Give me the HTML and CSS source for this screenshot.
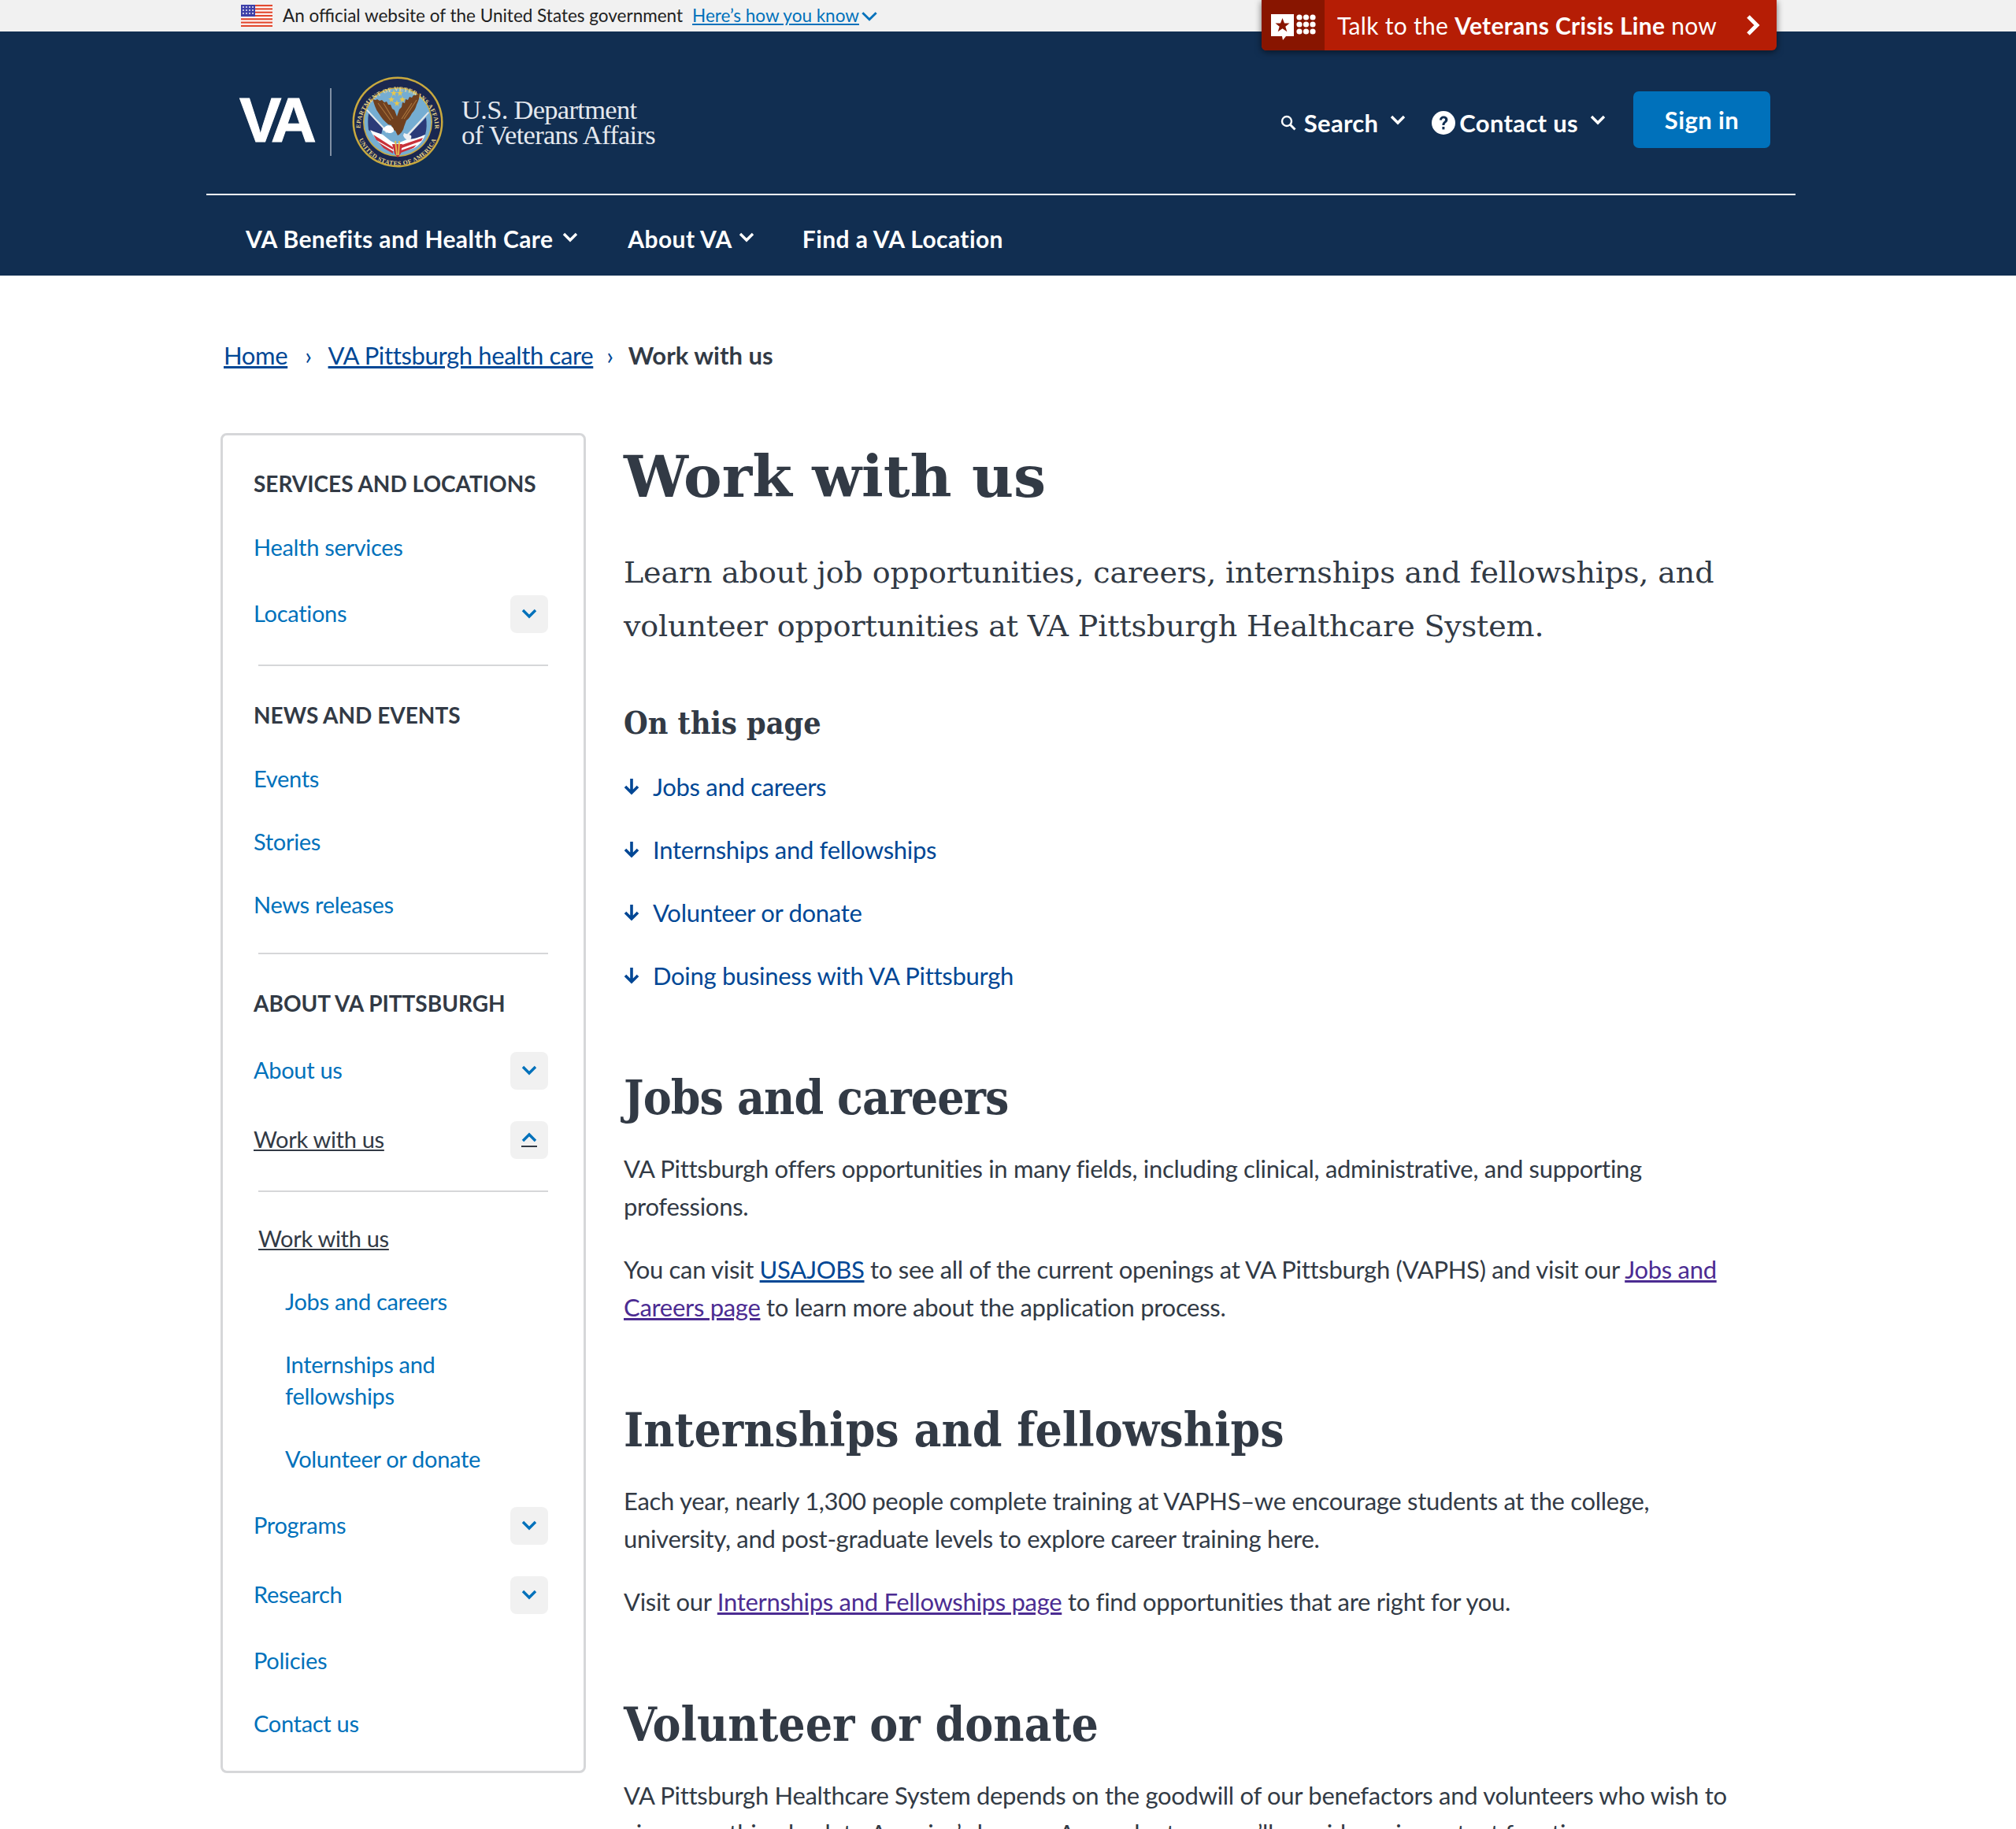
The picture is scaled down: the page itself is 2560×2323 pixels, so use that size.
FILE: index.html
```html
<!DOCTYPE html>
<html lang="en">
<head>
<meta charset="utf-8">
<title>Work with us | VA Pittsburgh health care</title>
<link rel="stylesheet" href="styles.css">
</head>
<body>
<div class="gov-banner">
  <svg class="flag" viewBox="0 0 40 28" width="40" height="28"><rect width="40" height="28" fill="#fff"/><g fill="#e2492f"><rect width="40" height="2.2"/><rect y="4.3" width="40" height="2.2"/><rect y="8.6" width="40" height="2.2"/><rect y="12.9" width="40" height="2.2"/><rect y="17.2" width="40" height="2.2"/><rect y="21.5" width="40" height="2.2"/><rect y="25.8" width="40" height="2.2"/></g><rect width="18" height="15" fill="#3d3fa8"/><g fill="#fff"><circle cx="3" cy="3" r=".9"/><circle cx="7" cy="3" r=".9"/><circle cx="11" cy="3" r=".9"/><circle cx="15" cy="3" r=".9"/><circle cx="3" cy="7" r=".9"/><circle cx="7" cy="7" r=".9"/><circle cx="11" cy="7" r=".9"/><circle cx="15" cy="7" r=".9"/><circle cx="3" cy="11" r=".9"/><circle cx="7" cy="11" r=".9"/><circle cx="11" cy="11" r=".9"/><circle cx="15" cy="11" r=".9"/></g></svg>
  <span class="gov-text">An official website of the United States government</span>
  <a class="gov-link" href="#">Here’s how you know</a>
  <svg class="gov-chev" viewBox="0 0 20 12" width="22" height="13"><path d="M2 2l8 8 8-8" fill="none" stroke="#0071bb" stroke-width="2.6"/></svg>
</div>

<a class="crisis" href="#">
  <span class="crisis-icon">
    <svg viewBox="0 0 58 34" width="58" height="34"><path d="M1 1h29v28H20l-4 5-1-5H1z" fill="#fff"/><path d="M15.500 6l2.500 6.500h6.500l-5.200 4.200 2 6.500-5.800-4-5.800 4 2-6.500-5.200-4.200h6.500z" fill="#881500"/><g fill="#fff"><circle cx="37" cy="5" r="3.600"/><circle cx="45.500" cy="5" r="3.600"/><circle cx="54" cy="5" r="3.600"/><circle cx="37" cy="14" r="3.600"/><circle cx="45.500" cy="14" r="3.600"/><circle cx="54" cy="14" r="3.600"/><circle cx="37" cy="23" r="3.600"/><circle cx="45.500" cy="23" r="3.600"/><circle cx="54" cy="23" r="3.600"/></g></svg>
  </span>
  <span class="crisis-text">Talk to the <b>Veterans Crisis Line</b> now</span>
  <svg class="crisis-chev" viewBox="0 0 18 26" width="18" height="26"><path d="M3 2l11 11L3 24" fill="none" stroke="#fff" stroke-width="5"/></svg>
</a>

<header class="site-header">
  <div class="header-inner">
    <div class="top-row">
      <a class="brand" href="#">
        <span class="brand-va">VA</span>
        <span class="brand-rule"></span>
        <svg class="seal" viewBox="0 0 116 116" width="116" height="116">
          <defs>
            <path id="arcTop" d="M10.500 66A47.500 47.500 0 1 1 105.500 66"/>
            <path id="arcBot" d="M5 60A53 53 0 0 0 111 60"/>
          </defs>
          <circle cx="58" cy="58" r="57.500" fill="#c9a93e"/>
          <circle cx="58" cy="58" r="55" fill="#1a2750"/>
          <circle cx="58" cy="58" r="44" fill="#c9a93e"/>
          <circle cx="58" cy="58" r="42.500" fill="#75add2"/>
          <text class="seal-text"><textPath href="#arcTop" startOffset="50%" text-anchor="middle">DEPARTMENT OF VETERANS AFFAIRS</textPath></text>
          <text class="seal-text"><textPath href="#arcBot" startOffset="50%" text-anchor="middle">UNITED STATES OF AMERICA</textPath></text>
          <path d="M18 43l1.500-1 26 28-2 2z" fill="#e8e8e8"/>
          <path d="M98 46l-1.500-1-28 30 2 2z" fill="#e8e8e8"/>
          <path d="M21 47l18 19-2 8c-6-2-12-2-16-6-1-7-1-14 0-21z" fill="#2b3a78"/>
          <path d="M94 52L73 74l1 6c6 0 13-2 19-6 2-7 2-14 1-22z" fill="#2b3a78"/>
          <path d="M23 68c6 3 12 4 16 6l10 8 8 4v10l-8-2c-8-4-18-10-26-26z" fill="#fff"/>
          <path d="M56 86l14-6c8 0 16-3 23-6-3 8-8 14-16 18l-21 4z" fill="#fff"/>
          <path d="M27 74l25 16v3L31 81zM34 84l18 11v3L40 91zM60 88l30-10-2 4-28 10zM62 94l20-7-4 4-16 6z" fill="#c8313a"/>
          <path d="M51 86h13l-2 12-4 5-4-5z" fill="#c8313a"/>
          <path d="M55 82l2 18M60 82l-1 18" fill="none" stroke="#e2c14d" stroke-width="1.800"/>
          <path d="M25 29l5 1 2-1 3 2 3-1 3 3 3-1 2 4 3 0 2 5 3 2 3 8 3-9 3-3 1-6 3 1 1-5 3 1 2-4 3 1 2-3 3 0 5-3c0 6-2 11-4 15-1 4-3 8-6 11-2 4-4 7-7 9l-3 8c-1 5-4 9-8 11l-3-6c-3-1-5-4-5-7l-4-1c-5-4-9-9-12-14-4-5-6-12-8-19z" fill="#70401f"/>
          <path d="M33 34l16 22M40 34l12 20M82 30L66 54M76 34L63 54" fill="none" stroke="#a9743d" stroke-width="1.200"/>
          <path d="M53 67c-2-5-8-6-11-3-2 1-3 3-3 5 2-1 4 0 5 2 3 2 7 1 9-1z" fill="#fff"/>
          <path d="M66 72l9 3c1 2 0 5-2 6-4 0-7-3-8-6z" fill="#eef1f4"/>
          <g fill="#e9c74a"><path d="M53 17l1 3h3l-2.500 2 1 3-2.500-2-2.500 2 1-3-2.500-2h3z"/><path d="M61 17l1 3h3l-2.500 2 1 3-2.500-2-2.500 2 1-3-2.500-2h3z"/><path d="M50 25l1 3h3l-2.500 2 1 3-2.500-2-2.500 2 1-3-2.500-2h3z"/><path d="M64 25l1 3h3l-2.500 2 1 3-2.500-2-2.500 2 1-3-2.500-2h3z"/><path d="M57 30l1 3h3l-2.500 2 1 3-2.500-2-2.500 2 1-3-2.500-2h3z"/></g>
        </svg>
        <span class="brand-name">U.S. Department<br>of Veterans Affairs</span>
      </a>
      <div class="utility">
        <a class="util-link util-search" href="#">
          <svg class="util-glass" viewBox="0 0 20 20" width="20" height="20"><circle cx="8" cy="8" r="6" fill="none" stroke="#fff" stroke-width="2.400"/><path d="M12.500 12.500l6 6" stroke="#fff" stroke-width="3"/></svg>
          <span>Search</span>
          <svg class="util-chev" viewBox="0 0 20 14" width="20" height="14"><path d="M2 2l8 8 8-8" fill="none" stroke="#fff" stroke-width="3.400"/></svg>
        </a>
        <a class="util-link util-contact" href="#">
          <svg class="util-help" viewBox="0 0 30 30" width="30" height="30"><circle cx="15" cy="15" r="15" fill="#fff"/><path d="M10 11.500c0-3 2.300-5 5.200-5 3 0 5.200 1.800 5.200 4.400 0 3.600-4 3.700-4 7.200h-3c0-4.700 3.700-4.500 3.700-7 0-1-.8-1.800-2-1.800-1.100 0-2 .8-2.100 2.200z" fill="#112e51"/><rect x="13.400" y="20" width="3" height="3.400" fill="#112e51"/></svg>
          <span>Contact us</span>
          <svg class="util-chev" viewBox="0 0 20 14" width="20" height="14"><path d="M2 2l8 8 8-8" fill="none" stroke="#fff" stroke-width="3.400"/></svg>
        </a>
        <a class="signin" href="#">Sign in</a>
      </div>
    </div>
    <nav class="main-nav">
      <a class="nav-item nav-benefits" href="#">VA Benefits and Health Care<svg class="nav-chev" viewBox="0 0 20 14" width="20" height="14"><path d="M2 2l8 8 8-8" fill="none" stroke="#fff" stroke-width="3.400"/></svg></a>
      <a class="nav-item nav-about" href="#">About VA<svg class="nav-chev" viewBox="0 0 20 14" width="20" height="14"><path d="M2 2l8 8 8-8" fill="none" stroke="#fff" stroke-width="3.400"/></svg></a>
      <a class="nav-item" href="#">Find a VA Location</a>
    </nav>
  </div>
</header>

<nav class="breadcrumbs">
  <a href="#">Home</a><span class="crumb-sep sep-a">›</span><a href="#">VA Pittsburgh health care</a><span class="crumb-sep sep-b">›</span><strong>Work with us</strong>
</nav>

<div class="page">
  <aside class="sidebar">
    <h4 class="side-head">Services and locations</h4>
    <ul class="side-list">
      <li class="side-item"><a href="#">Health services</a></li>
      <li class="side-item tall"><a href="#">Locations</a><button class="toggle"><svg viewBox="0 0 20 14" width="20" height="14"><path d="M2 2l8 8 8-8" fill="none" stroke="#0071bb" stroke-width="3.400"/></svg></button></li>
    </ul>
    <hr class="side-rule">
    <h4 class="side-head">News and events</h4>
    <ul class="side-list">
      <li class="side-item"><a href="#">Events</a></li>
      <li class="side-item"><a href="#">Stories</a></li>
      <li class="side-item"><a href="#">News releases</a></li>
    </ul>
    <hr class="side-rule">
    <h4 class="side-head">About VA Pittsburgh</h4>
    <ul class="side-list">
      <li class="side-item tall"><a href="#">About us</a><button class="toggle"><svg viewBox="0 0 20 14" width="20" height="14"><path d="M2 2l8 8 8-8" fill="none" stroke="#0071bb" stroke-width="3.400"/></svg></button></li>
      <li class="side-item tall"><a class="current" href="#">Work with us</a><button class="toggle"><svg viewBox="0 0 20 20" width="20" height="20"><path d="M2 11l8-8 8 8" fill="none" stroke="#0071bb" stroke-width="3.400"/><rect y="17" width="20" height="2" fill="#323a45"/></svg></button></li>
    </ul>
    <hr class="side-rule rule-sub">
    <ul class="side-list">
      <li class="side-item sub-root"><a class="current" href="#">Work with us</a></li>
      <li class="side-item sub"><a href="#">Jobs and careers</a></li>
      <li class="side-item sub sub-wrap"><a href="#">Internships and<br>fellowships</a></li>
      <li class="side-item sub"><a href="#">Volunteer or donate</a></li>
      <li class="side-item tall"><a href="#">Programs</a><button class="toggle"><svg viewBox="0 0 20 14" width="20" height="14"><path d="M2 2l8 8 8-8" fill="none" stroke="#0071bb" stroke-width="3.400"/></svg></button></li>
      <li class="side-item tall"><a href="#">Research</a><button class="toggle"><svg viewBox="0 0 20 14" width="20" height="14"><path d="M2 2l8 8 8-8" fill="none" stroke="#0071bb" stroke-width="3.400"/></svg></button></li>
      <li class="side-item"><a href="#">Policies</a></li>
      <li class="side-item"><a href="#">Contact us</a></li>
    </ul>
  </aside>

  <main class="content">
    <h1>Work with us</h1>
    <p class="lead">Learn about job opportunities, careers, internships and fellowships, and<br>volunteer opportunities at VA Pittsburgh Healthcare System.</p>
    <h3 class="toc-head">On this page</h3>
    <ul class="toc">
      <li><svg viewBox="0 0 20 22" width="20" height="22"><path d="M10 1v18M2 11l8 8 8-8" fill="none" stroke="#004795" stroke-width="3.600"/></svg><a href="#">Jobs and careers</a></li>
      <li><svg viewBox="0 0 20 22" width="20" height="22"><path d="M10 1v18M2 11l8 8 8-8" fill="none" stroke="#004795" stroke-width="3.600"/></svg><a href="#">Internships and fellowships</a></li>
      <li><svg viewBox="0 0 20 22" width="20" height="22"><path d="M10 1v18M2 11l8 8 8-8" fill="none" stroke="#004795" stroke-width="3.600"/></svg><a href="#">Volunteer or donate</a></li>
      <li><svg viewBox="0 0 20 22" width="20" height="22"><path d="M10 1v18M2 11l8 8 8-8" fill="none" stroke="#004795" stroke-width="3.600"/></svg><a href="#">Doing business with VA Pittsburgh</a></li>
    </ul>
    <h2 class="h2-first">Jobs and careers</h2>
    <p class="after-h2">VA Pittsburgh offers opportunities in many fields, including clinical, administrative, and supporting<br>professions.</p>
    <p>You can visit <a href="#">USAJOBS</a> to see all of the current openings at VA Pittsburgh (VAPHS) and visit our <a class="visited" href="#">Jobs and<br>Careers page</a> to learn more about the application process.</p>
    <h2>Internships and fellowships</h2>
    <p class="after-h2">Each year, nearly 1,300 people complete training at VAPHS–we encourage students at the college,<br>university, and post-graduate levels to explore career training here.</p>
    <p>Visit our <a class="visited" href="#">Internships and Fellowships page</a> to find opportunities that are right for you.</p>
    <h2>Volunteer or donate</h2>
    <p class="after-h2">VA Pittsburgh Healthcare System depends on the goodwill of our benefactors and volunteers who wish to<br>give something back to America’s heroes. As a volunteer, you’ll provide an important function</p>
  </main>
</div>
</body>
</html>
```

FILE: styles.css
```css
* { box-sizing: border-box; }
html, body { margin: 0; padding: 0; height: 2323px; overflow: hidden; background: #fff; }
body {
  position: relative;
  font-family: "Lato", "Noto Sans", sans-serif;
  color: #323a45;
  font-size: 31px;
  line-height: 48px;
  letter-spacing: -.3px;
}
a { color: #004795; }
ul { list-style: none; margin: 0; padding: 0; }

/* gov banner */
.gov-banner {
  height: 40px;
  background: #f1f1f1;
  display: flex;
  align-items: center;
  padding-left: 306px;
  font-size: 22.500px;
  line-height: 28px;
  color: #212121;
  letter-spacing: 0;
}
.flag { margin-right: 13px; }
.gov-text { margin-right: 12px; }
.gov-link { color: #0071bb; }
.gov-chev { margin-left: 2px; }

/* crisis */
.crisis {
  position: absolute;
  left: 1602px;
  top: 0;
  width: 654px;
  height: 64px;
  display: flex;
  align-items: center;
  background: #b51d05;
  color: #fff;
  text-decoration: none;
  border-radius: 0 0 6px 6px;
  box-shadow: 0 2px 8px rgba(0,0,0,.55);
  font-size: 30px;
  letter-spacing: .3px;
}
.crisis-icon {
  width: 80px;
  height: 64px;
  background: #881500;
  border-radius: 0 0 0 6px;
  display: flex;
  align-items: flex-start;
  justify-content: center;
  padding-top: 17px;
}
.crisis-text { margin-left: 16px; }
.crisis-chev { margin-left: auto; margin-right: 21px; }

/* header */
.site-header { background: #112e51; height: 310px; color: #fff; }
.header-inner { width: 2018px; margin-left: 262px; }
.top-row {
  height: 208px;
  border-bottom: 2px solid #fff;
  display: flex;
  align-items: flex-start;
  justify-content: space-between;
  padding-top: 56px;
}
.brand { display: flex; align-items: center; height: 118px; color: #fff; text-decoration: none; padding-left: 42px; }
.brand-va {
  font-family: "Liberation Sans", sans-serif;
  font-weight: 700;
  font-size: 80px;
  line-height: 92px;
  letter-spacing: -7.500px;
  -webkit-text-stroke: 1px #fff;
  width: 115px;
  padding-bottom: 4px;
}
.brand-rule { width: 2px; height: 86px; background: #7f8fa3; margin-right: 26px; }
.seal { flex: none; }
.seal-text { font: 700 7.800px "Liberation Serif", serif; fill: #e9d68a; letter-spacing: .5px; }
.brand-name {
  font-family: "Liberation Serif", serif;
  font-size: 34.500px;
  line-height: 32px;
  margin-left: 23px;
  letter-spacing: -.7px;
  color: #e4e8ee;
}
.utility { display: flex; align-items: flex-start; padding-top: 20px; margin-right: 32px; }
.util-link {
  display: flex;
  align-items: center;
  height: 72px;
  color: #fff;
  text-decoration: none;
  font-weight: 700;
  font-size: 31px;
  letter-spacing: .3px;
  padding-top: 8px;
}
.util-glass { margin-right: 10px; }
.util-chev { margin-left: 15px; margin-top: -6px; }
.util-search { margin-right: 33px; }
.util-help { margin-right: 5px; }
.util-contact { margin-right: 35px; }
.signin {
  width: 174px;
  height: 72px;
  background: #0071bb;
  border-radius: 7px;
  display: flex;
  align-items: center;
  justify-content: center;
  color: #fff;
  text-decoration: none;
  font-weight: 700;
  font-size: 31px;
  letter-spacing: .4px;
}
.main-nav { display: flex; align-items: center; height: 100px; padding: 10px 0 0 50px; }
.nav-item {
  color: #fff;
  text-decoration: none;
  font-weight: 700;
  font-size: 30px;
  letter-spacing: .4px;
  display: flex;
  align-items: center;
}
.nav-chev { margin-left: 12px; margin-top: -2px; }
.nav-benefits { margin-right: 63px; }
.nav-about { margin-right: 61px; }
.nav-about .nav-chev { margin-left: 8px; }

/* breadcrumbs */
.breadcrumbs {
  height: 200px;
  padding: 81px 0 0 284px;
  line-height: 40px;
  font-size: 31px;
  letter-spacing: -.36px;
  display: flex;
  align-items: flex-start;
}
.breadcrumbs strong { font-weight: 700; letter-spacing: 0; }
.crumb-sep { color: #004795; }
.sep-a { margin: 0 21px 0 22px; }
.sep-b { margin: 0 19px 0 17px; }

/* layout */
.page { display: flex; align-items: flex-start; padding-left: 280px; gap: 48px; }

/* sidebar */
.sidebar {
  width: 464px;
  flex: none;
  height: 1702px;
  border: 3px solid #d6d7d9;
  border-radius: 8px;
  padding: 37px 45px 0 39px;
}
.side-head {
  margin: 0 0 18px;
  height: 48px;
  line-height: 48px;
  font-size: 28px;
  font-weight: 700;
  text-transform: uppercase;
  letter-spacing: 0;
}
.side-item {
  height: 80px;
  display: flex;
  align-items: center;
  justify-content: space-between;
  font-size: 29px;
  line-height: 40px;
  letter-spacing: -.3px;
}
.side-item.tall { height: 88px; }
.side-item a { color: #0071bb; text-decoration: none; margin-bottom: 2px; }
.side-item a.current { color: #323a45; text-decoration: underline; }
.sub-root { padding-left: 6px; }
.sub { padding-left: 40px; }
.side-item.sub a { color: #0071bb; }
.sub-wrap { height: 120px; }
.toggle {
  width: 48px;
  height: 48px;
  border: 0;
  padding: 0;
  border-radius: 8px;
  background: #f1f1f1;
  display: flex;
  align-items: center;
  justify-content: center;
}
.side-rule {
  border: 0;
  height: 2px;
  background: #d6d7d9;
  margin: 20px 0 38px 6px;
}
.rule-sub { margin-bottom: 20px; }

/* content */
.content { width: 1440px; flex: none; }
.content h1 {
  margin: 7px 0 0;
  font-family: "DejaVu Serif", serif;
  font-weight: 700;
  font-size: 73px;
  line-height: 96px;
  letter-spacing: 0;
}
.content p.lead {
  margin: 40px 0 0;
  font-family: "DejaVu Serif", serif;
  font-size: 38px;
  line-height: 68px;
  letter-spacing: -.13px;
}
.toc-head {
  margin: 61px 0 0;
  font-family: "DejaVu Serif", serif;
  font-stretch: condensed;
  font-weight: 700;
  font-size: 39.200px;
  line-height: 56px;
  letter-spacing: 0;
}
.toc { margin-top: 13px; }
.toc li { height: 80px; display: flex; align-items: center; gap: 17px; }
.toc a { text-decoration: none; }
.content h2 {
  margin: 96px 0 0;
  font-family: "DejaVu Serif", serif;
  font-stretch: condensed;
  font-weight: 700;
  font-size: 60px;
  line-height: 72px;
  letter-spacing: 0;
}
.content h2.h2-first { margin-top: 79px; letter-spacing: -.9px; }
.content p { margin: 32px 0 0; }
.content p.after-h2 { margin-top: 30px; }
.visited { color: #4c2c92; }
```
